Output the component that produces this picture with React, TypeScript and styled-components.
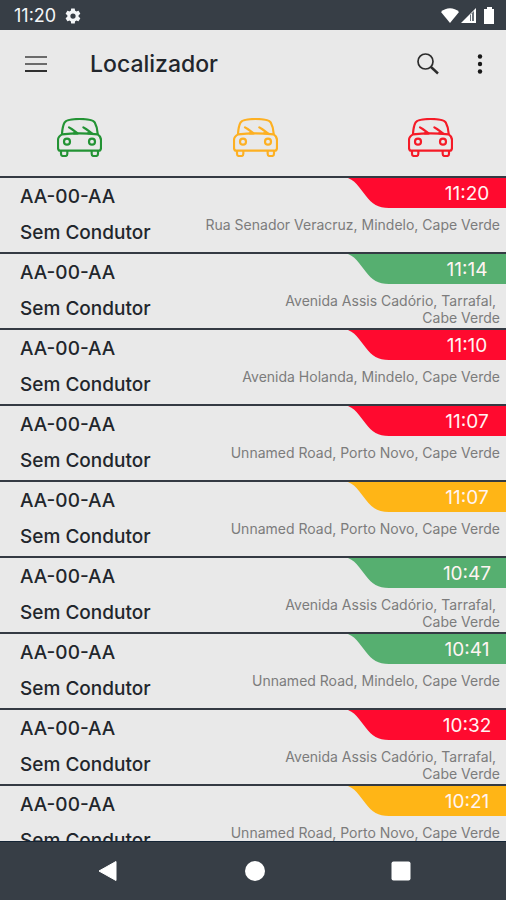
import React from "react";
import styled, { createGlobalStyle } from "styled-components";

const GlobalStyle = createGlobalStyle`
  *, *::before, *::after { box-sizing: border-box; }
  body {
    margin: 0;
    background: #e9e9e9;
    color: #22262c;
    font-family: Inter, "Noto Sans", sans-serif;
  }
  button {
    border: 0;
    padding: 0;
    background: none;
    color: inherit;
    font: inherit;
    cursor: pointer;
  }
`;

const tones = {
  green: "#56af70",
  amber: "#ffb516",
  red: "#ff0a2f",
};

type Tone = keyof typeof tones;

const Screen = styled.div`
  display: flex;
  flex-direction: column;
  height: 100vh;
  overflow: hidden;
`;

const StatusBar = styled.div`
  display: flex;
  flex: none;
  align-items: center;
  height: 30px;
  padding: 2px 10px 0 14px;
  background: #373e46;
  color: #f4f6f8;
  font-size: 18px;
  line-height: 28px;
`;

const StatusIcons = styled.span`
  display: flex;
  align-items: center;
  margin-left: auto;
`;

const GearIcon = styled.svg`
  margin-left: 8px;
`;

const AppBar = styled.header`
  display: flex;
  flex: none;
  align-items: center;
  height: 68px;
  padding: 0 10px 0 20px;
`;

const Title = styled.h1`
  flex: 1;
  margin: 0 0 0 38px;
  font-size: 23px;
  font-weight: 500;
  line-height: 30px;
`;

const IconButton = styled.button`
  display: grid;
  place-items: center;
  width: 32px;
  height: 40px;

  & + & {
    margin-left: 20px;
  }
`;

const Filters = styled.nav`
  display: flex;
  flex: none;
  justify-content: space-between;
  align-items: center;
  height: 78px;
  padding: 0 53px 0 57px;
`;

const FilterButton = styled.button<{ $color: string }>`
  display: block;
  height: 39px;
  color: ${(p) => p.$color};

  svg { display: block; }
`;

const VehicleList = styled.ul`
  flex: 1;
  min-height: 0;
  margin: 0;
  padding: 0;
  overflow: hidden;
  list-style: none;
`;

const VehicleRow = styled.li`
  display: flex;
  justify-content: space-between;
  height: 76px;
  border-top: 2px solid #343a43;
`;

const VehicleInfo = styled.div`
  flex: none;
  padding: 1px 0 0 20px;
  font-size: 19px;
  font-weight: 500;
  line-height: 36px;
`;

const Position = styled.div`
  display: flex;
  flex: 1;
  flex-direction: column;
  align-items: flex-end;
`;

const TimeTab = styled.div<{ $tone: Tone }>`
  display: flex;
  height: 30px;
  color: ${(p) => tones[p.$tone]};
`;

const TabEdge = styled.svg`
  display: block;
  margin-right: -1px;
`;

const Time = styled.time`
  width: 118px;
  padding-left: 40px;
  background: currentColor;
  text-align: center;
  font-size: 19px;
  line-height: 32px;

  span { color: #fff4f2; }
`;

const Address = styled.address`
  padding: 8px 6px 0 0;
  color: #7c7c7c;
  font-size: 14px;
  font-style: normal;
  line-height: 17px;
  text-align: right;
  white-space: pre-line;
`;

const SystemNav = styled.nav`
  display: flex;
  flex: none;
  justify-content: space-between;
  height: 59px;
  padding: 0 81px 0 84px;
  border-top: 1px solid #142536;
  background: #373e46;
  color: #fff;
`;

const NavButton = styled.button`
  display: grid;
  place-items: center;
  width: 48px;
`;

function Car() {
  return (
    <svg width="45" height="39" viewBox="52 55 135 117" fill="none" stroke="currentColor" strokeWidth="6.500" strokeLinecap="round" strokeLinejoin="round" aria-hidden="true">
      <path d="M67 102C68 87 70 77 75 68C80 61 96 58 120 58C144 58 160 61 165 68C170 77 173 87 174 102" />
      <path d="M67 104C96 101 145 101 174 104C182 109 184 113 184 121V143C184 149 182 153 178 153H61C57 153 55 149 55 143V121C55 113 58 109 67 104Z" />
      <path d="M88 83L96 88L114 101H102M131 83L139 88L157 101H145" />
      <circle cx="82" cy="126" r="9" />
      <circle cx="157" cy="126" r="9" />
      <path d="M64 154V162Q64 169 70 169H77Q83 169 83 162V154M156 154V162Q156 169 162 169H169Q175 169 175 162V154" />
    </svg>
  );
}

const filters = [
  { label: "Verde", color: "#239334" },
  { label: "Amarelo", color: "#fdb022" },
  { label: "Vermelho", color: "#f51b27" },
];

const ASSIS = "Avenida Assis Cadório, Tarrafal,\u00a0\nCabe Verde";
const PORTO = "Unnamed Road, Porto Novo, Cape Verde";

const vehicles: { time: string; tone: Tone; address: string }[] = [
  { time: "11:20", tone: "red", address: "Rua Senador Veracruz, Mindelo, Cape Verde" },
  { time: "11:14", tone: "green", address: ASSIS },
  { time: "11:10", tone: "red", address: "Avenida Holanda, Mindelo, Cape Verde" },
  { time: "11:07", tone: "red", address: PORTO },
  { time: "11:07", tone: "amber", address: PORTO },
  { time: "10:47", tone: "green", address: ASSIS },
  { time: "10:41", tone: "green", address: "Unnamed Road, Mindelo, Cape Verde" },
  { time: "10:32", tone: "red", address: ASSIS },
  { time: "10:21", tone: "amber", address: PORTO },
];

export default function App() {
  return (
    <Screen>
      <GlobalStyle />
      <StatusBar>
        <span>11:20</span>
        <GearIcon width="18" height="18" viewBox="0 0 24 24" fill="currentColor" aria-hidden="true">
          <path fillRule="evenodd" d="M19.4 13c0-.3.1-.6.1-1s0-.7-.1-1l2.1-1.600c.2-.2.2-.4.1-.600l-2-3.500c-.1-.2-.4-.3-.6-.2l-2.500 1c-.5-.4-1.100-.7-1.700-1l-.4-2.600c0-.3-.2-.5-.4-.5h-4c-.2 0-.4.2-.5.400l-.4 2.700c-.6.3-1.200.6-1.700 1l-2.500-1c-.2-.1-.5 0-.6.2l-2 3.500c-.1.2-.1.5.1.600L4.500 11c0 .3-.1.600-.1 1s0 .7.1 1l-2.100 1.600c-.2.2-.2.4-.1.6l2 3.500c.1.2.4.3.6.2l2.500-1c.5.4 1.100.7 1.700 1l.4 2.600c0 .3.2.5.5.5h4c.2 0 .4-.2.4-.4l.4-2.700c.6-.3 1.200-.6 1.700-1l2.500 1c.2.1.5 0 .6-.2l2-3.500c.1-.2.1-.5-.1-.6L19.400 13ZM12 15.500a3.500 3.500 0 1 1 0-7 3.500 3.500 0 0 1 0 7Z" />
        </GearIcon>
        <StatusIcons>
          <svg width="56" height="18" viewBox="0 0 56 18" aria-hidden="true">
            <path d="M1 5C6 0 14 0 19 5L10 16Z" fill="#fff" />
            <path d="M21 16L36 1V16Z" fill="#fff" />
            <path d="M30 14V8L34 4V14Z" fill="#687078" />
            <path d="M31 14V7H32V14Z" fill="#fff" />
            <path d="M44 2H47V0H52V2H54V17H44Z" fill="#fff" />
          </svg>
        </StatusIcons>
      </StatusBar>

      <AppBar>
        <IconButton aria-label="Menu">
          <svg width="24" height="18" viewBox="0 0 24 18" aria-hidden="true">
            <path d="M1 2H23M1 9H23" stroke="#6b6b6b" strokeWidth="2" />
            <path d="M1 16H23" stroke="#303030" strokeWidth="2" />
          </svg>
        </IconButton>
        <Title>Localizador</Title>
        <IconButton aria-label="Pesquisar">
          <svg width="24" height="24" viewBox="0 0 24 24" fill="none" stroke="#2c2c2c" aria-hidden="true">
            <circle cx="9.500" cy="9.500" r="7.500" strokeWidth="1.700" />
            <path d="M15 15L22 21.500" strokeWidth="2.400" />
          </svg>
        </IconButton>
        <IconButton aria-label="Mais opções">
          <svg width="6" height="20" viewBox="0 0 6 20" fill="#181818" aria-hidden="true">
            <circle cx="3" cy="2.500" r="2.200" />
            <circle cx="3" cy="10" r="2.200" />
            <circle cx="3" cy="17.500" r="2.200" />
          </svg>
        </IconButton>
      </AppBar>

      <Filters aria-label="Filtros">
        {filters.map((f) => (
          <FilterButton key={f.label} $color={f.color} aria-label={f.label}>
            <Car />
          </FilterButton>
        ))}
      </Filters>

      <VehicleList>
        {vehicles.map((v, i) => (
          <VehicleRow key={i}>
            <VehicleInfo>
              <div>AA-00-AA</div>
              <div>Sem Condutor</div>
            </VehicleInfo>
            <Position>
              <TimeTab $tone={v.tone}>
                <TabEdge width="41" height="30" viewBox="0 0 41 30" fill="currentColor" aria-hidden="true">
                  <path d="M0 0C5 2 8 5 11 9L18 18C24 26 30 30 41 30V0Z" />
                </TabEdge>
                <Time>
                  <span>{v.time}</span>
                </Time>
              </TimeTab>
              <Address>{v.address}</Address>
            </Position>
          </VehicleRow>
        ))}
      </VehicleList>

      <SystemNav aria-label="Sistema">
        <NavButton aria-label="Voltar">
          <svg width="20" height="20" viewBox="0 0 20 20" fill="currentColor" aria-hidden="true">
            <path d="M1 10L18 0.500V19.500Z" stroke="currentColor" strokeLinejoin="round" />
          </svg>
        </NavButton>
        <NavButton aria-label="Início">
          <svg width="20" height="20" viewBox="0 0 20 20" fill="currentColor" aria-hidden="true">
            <circle cx="10" cy="10" r="10" />
          </svg>
        </NavButton>
        <NavButton aria-label="Recentes">
          <svg width="20" height="20" viewBox="0 0 20 20" fill="currentColor" aria-hidden="true">
            <rect x="0.500" y="0.500" width="19" height="19" rx="2" />
          </svg>
        </NavButton>
      </SystemNav>
    </Screen>
  );
}
